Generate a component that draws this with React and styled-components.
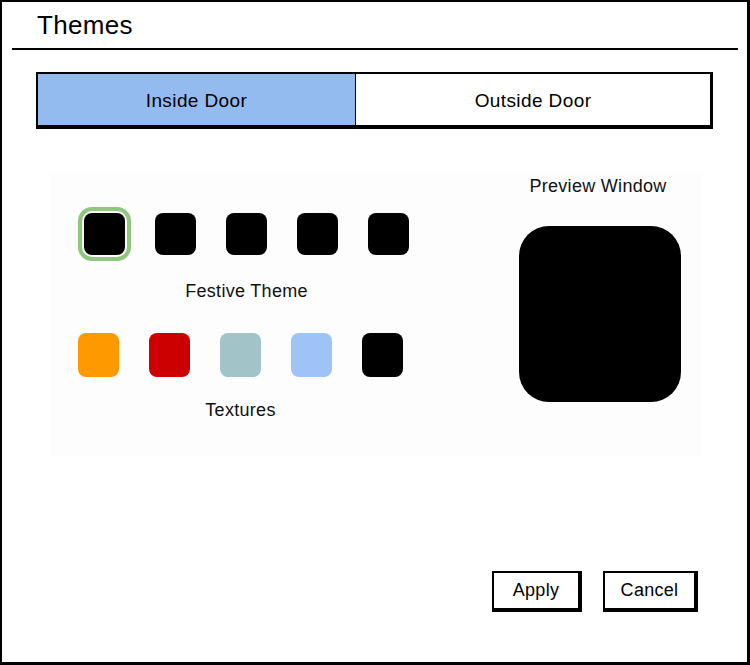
import React, { useState } from 'react';
import styled, { createGlobalStyle } from 'styled-components';

const GlobalStyle = createGlobalStyle`
    html, body { margin: 0; padding: 0; background: #ffffff; }
    body { font-family: "Liberation Sans", Arial, sans-serif; color: #000; }
`;

const festive = ['#000', '#000', '#000', '#000', '#000'];
const textures = ['#ff9900', '#cc0000', '#a2c3c8', '#9ec3f6', '#000'];

function App() {
    const [tab, setTab] = useState(0);
    const [picked, setPicked] = useState(0);

    return (
        <>
            <GlobalStyle />
            <Frame>
                <Header>
                    <Title>Themes</Title>
                </Header>
                <Divider />

                <Tabs>
                    <Tab $width={317} $active={tab === 0} onClick={() => setTab(0)}>Inside Door</Tab>
                    <Tab $active={tab === 1} onClick={() => setTab(1)}>Outside Door</Tab>
                </Tabs>

                <Panel>
                    <Pickers>
                        <Group $offset={34}>
                            <SwatchRow>
                                {festive.map((c, i) => (
                                    <Swatch key={i} $color={c} $selected={picked === i} onClick={() => setPicked(i)} />
                                ))}
                            </SwatchRow>
                            <Label $gap={26}>Festive Theme</Label>
                        </Group>
                        <Group $offset={28} $top={31}>
                            <SwatchRow>
                                {textures.map((c, i) => (
                                    <Swatch key={i} $color={c} $tall />
                                ))}
                            </SwatchRow>
                            <Label $gap={23}>Textures</Label>
                        </Group>
                    </Pickers>

                    <Preview>
                        <Label $gap={3}>Preview Window</Label>
                        <PreviewBox />
                    </Preview>
                </Panel>

                <Footer>
                    <Button $width={90}>Apply</Button>
                    <Button $width={95}>Cancel</Button>
                </Footer>
            </Frame>
        </>
    );
}

const Frame = styled.div`
    width: 750px;
    height: 665px;
    box-sizing: border-box;
    border: 2px solid #000;
    border-right-width: 3px;
    border-bottom-width: 3px;
    display: flex;
    flex-direction: column;
    background: #fff;
`;

const Header = styled.div`
    height: 46px;
    padding-left: 35px;
    display: flex;
    align-items: center;
`;

const Title = styled.h1`
    margin: 0;
    font-size: 26px;
    font-weight: normal;
    letter-spacing: 0.3px;
`;

const Divider = styled.div`
    margin: 0 9px 0 10px;
    height: 2px;
    background: #000;
`;

const Tabs = styled.div`
    margin: 22px 0 0 34px;
    width: 677px;
    height: 57px;
    box-sizing: border-box;
    border: 2px solid #000;
    border-right-width: 3px;
    border-bottom-width: 4px;
    display: flex;
`;

const Tab = styled.div`
    ${p => (p.$width ? `width: ${p.$width}px; flex: none;` : 'flex: 1;')}
    display: flex;
    align-items: center;
    justify-content: center;
    padding-top: 3px;
    box-sizing: border-box;
    font-size: 19px;
    letter-spacing: 0.4px;
    cursor: pointer;
    background: ${p => (p.$active ? '#94bbf0' : '#fff')};
    & + & {
        border-left: 1px solid #000;
    }
`;

const Panel = styled.div`
    margin: 44px 0 0 48px;
    width: 652px;
    height: 283px;
    background: #fdfdfd;
    display: flex;
`;

const Pickers = styled.div`
    width: 420px;
    display: flex;
    flex-direction: column;
    align-items: flex-start;
    padding-top: 40px;
    box-sizing: border-box;
`;

const Group = styled.div`
    margin-left: ${p => p.$offset}px;
    margin-top: ${p => p.$top || 0}px;
    display: flex;
    flex-direction: column;
    align-items: center;
`;

const SwatchRow = styled.div`
    display: flex;
    gap: 30px;
`;

const Swatch = styled.div`
    width: 41px;
    height: ${p => (p.$tall ? 44 : 42)}px;
    border-radius: 8px;
    background: ${p => p.$color};
    cursor: pointer;
    box-shadow: ${p => (p.$selected ? '0 0 0 2px #fff, 0 0 0 6px #8ec77d' : 'none')};
`;

const Label = styled.div`
    margin-top: ${p => p.$gap}px;
    font-size: 18px;
    letter-spacing: 0.3px;
    color: #111;
`;

const Preview = styled.div`
    flex: 1;
    display: flex;
    flex-direction: column;
    align-items: center;
    margin-left: 24px;
`;

const PreviewBox = styled.div`
    margin: 29px 0 0 4px;
    width: 162px;
    height: 176px;
    border-radius: 30px;
    background: #000;
`;

const Footer = styled.div`
    margin-top: 115px;
    padding-left: 490px;
    display: flex;
    gap: 21px;
`;

const Button = styled.button`
    width: ${p => p.$width}px;
    height: 41px;
    padding: 0;
    box-sizing: border-box;
    border: 2px solid #000;
    border-right-width: 4px;
    border-bottom-width: 4px;
    background: #fff;
    font-family: "Liberation Sans", Arial, sans-serif;
    font-size: 18px;
    letter-spacing: 0.3px;
    cursor: pointer;
`;

export default App;
